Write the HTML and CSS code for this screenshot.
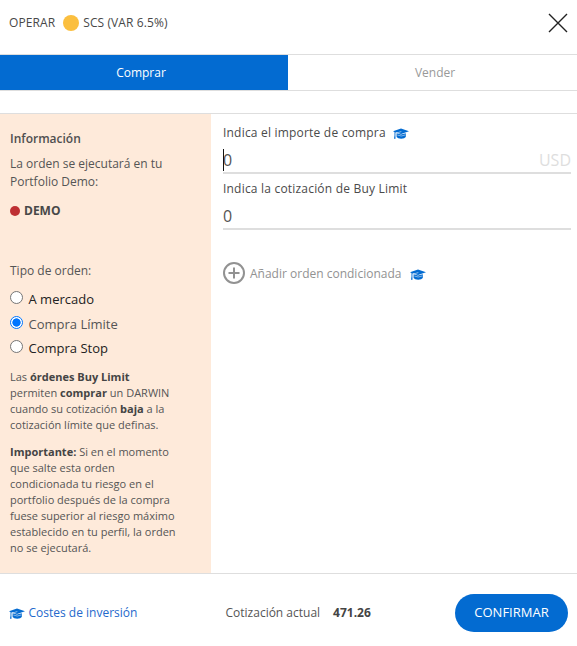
FILE: index.html
```html
<!DOCTYPE html>
<html lang="es">
<head>
<meta charset="utf-8">
<title>Operar</title>
<link rel="stylesheet" href="styles.css">
</head>
<body>
<svg width="0" height="0" class="defs">
  <symbol id="cap" viewBox="0 0 16 12">
    <path d="M8 .6 16 3.300 8 6.100 4 4.800 8.500 4 8.200 3.400 2.400 4.500V7.500L2.500 10.800H1L1.500 7.500V4L0 3.300z"/>
    <path d="M3.600 5.200 8 6.600 12.800 5.200V9Q11.700 10.700 8.200 10.700T3.600 9z"/>
    <path class="shade" d="M4.300 7Q8.200 9 12.200 7"/>
  </symbol>
</svg>
<div class="dialog">
  <header class="header">
    <span class="title">OPERAR</span>
    <span class="asset-dot"></span>
    <span class="title">SCS (VAR 6.5%)</span>
    <svg class="close" viewBox="0 0 20 20"><path d="M1 1 19 19M19 1 1 19"/></svg>
  </header>
  <nav class="tabs">
    <div class="tab active">Comprar</div>
    <div class="tab">Vender</div>
  </nav>
  <main class="body">
    <aside class="info">
      <h2>Información</h2>
      <p class="lead">La orden se ejecutará en tu<br>Portfolio Demo:</p>
      <div class="demo"><i></i>DEMO</div>
      <p class="type-label">Tipo de orden:</p>
      <div class="options">
        <label><span class="radio"></span>A mercado</label>
        <label class="selected"><span class="radio"></span>Compra Límite</label>
        <label><span class="radio"></span>Compra Stop</label>
      </div>
      <p class="note">Las <b>órdenes Buy Limit</b><br>permiten <b>comprar</b> un DARWIN<br>cuando su cotización <b>baja</b> a la<br>cotización límite que definas.</p>
      <p class="note"><b>Importante:</b> Si en el momento<br>que salte esta orden<br>condicionada tu riesgo en el<br>portfolio después de la compra<br>fuese superior al riesgo máximo<br>establecido en tu perfil, la orden<br>no se ejecutará.</p>
    </aside>
    <section class="form">
      <div class="field-label"><span>Indica el importe de compra</span><svg class="cap"><use href="#cap"/></svg></div>
      <div class="field focused"><span class="value">0</span><span class="unit">USD</span></div>
      <div class="field-label second"><span>Indica la cotización de Buy Limit</span></div>
      <div class="field"><span class="value">0</span></div>
      <div class="add">
        <svg class="plus" viewBox="0 0 22 22"><circle cx="11" cy="11" r="10"/><path d="M11 5.500V16.500M5.500 11H16.500"/></svg>
        <span>Añadir orden condicionada</span>
        <svg class="cap"><use href="#cap"/></svg>
      </div>
    </section>
  </main>
  <footer class="footer">
    <a class="costs"><svg class="cap"><use href="#cap"/></svg><span>Costes de inversión</span></a>
    <div class="quote"><span>Cotización actual</span><b>471.26</b></div>
    <div class="confirm">CONFIRMAR</div>
  </footer>
</div>
</body>
</html>
```
FILE: styles.css
```css
* { box-sizing: border-box; }
body { margin: 0; background: #fff; color: #555; font: 12px/18px "Open Sans", sans-serif; white-space: nowrap; }
h2, p { margin: 0; }
.defs { display: block; height: 0; }
.dialog { width: 577px; height: 646px; display: flex; flex-direction: column; overflow: hidden; }
.header { height: 55px; border-bottom: 1px solid #dedede; display: flex; align-items: center; padding: 0 9px 9px 9px; color: #484848; font-weight: 500; letter-spacing: .1px; }
.asset-dot { width: 16px; height: 16px; border-radius: 50%; background: #fbbf3f; margin: 0 4px 0 8px; }
.close { width: 20px; height: 20px; margin-left: auto; fill: none; stroke: #222; stroke-width: 1.4; }
.tabs { height: 36px; display: flex; border-bottom: 1px solid #dedede; }
.tab { width: 294px; flex: none; text-align: center; line-height: 35px; color: #999; }
.tab.active { width: 288px; padding-right: 6px; background: #036bd1; color: #fff; font-weight: 500; }
.body { margin-top: 22px; height: 461px; border-top: 1px solid #dedede; border-bottom: 1px solid #dedede; display: flex; }
.info { width: 211px; flex: none; background: #feeada; padding: 16px 0 0 10px; }
.info h2 { font-size: 12px; font-weight: 600; color: #4f4f4f; }
.lead { margin-top: 7px; }
.demo { display: flex; align-items: center; gap: 4px; margin-top: 11px; font-weight: 700; color: #484848; }
.demo i { width: 10px; height: 10px; border-radius: 50%; background: #be3033; }
.type-label { margin-top: 42px; }
.options { margin-top: 7px; height: 74px; }
.options label { display: flex; align-items: center; gap: 5.500px; height: 24.600px; font-size: 13px; color: #222; }
.options .selected { color: #555; }
.radio { width: 13px; height: 13px; border: 1px solid #767676; border-radius: 50%; background: #fff; margin-bottom: 3px; }
.selected .radio { border-color: #0075ff; background: radial-gradient(circle, #0075ff 3.800px, #fff 4.500px); }
.note { margin-top: 8px; font-size: 11px; line-height: 16px; }
.note + .note { margin-top: 11px; }
.note b { color: #444; }
.form { flex: 1; padding: 9px 6px 0 12px; }
.field-label { height: 20px; line-height: 20px; display: flex; align-items: center; gap: 7.500px; color: #4a4a4a; font-weight: 500; letter-spacing: .2px; }
.field-label.second { margin-top: 5px; }
.cap { width: 16px; height: 12px; flex: none; fill: #036bd1; margin-top: 2px; }
.shade { fill: none; stroke: #fff; stroke-width: .5; }
.field { position: relative; height: 31px; border-bottom: 2px solid #dedede; display: flex; justify-content: space-between; align-items: center; font-size: 16px; line-height: 24px; padding-top: 5px; }
.field.focused::before { content: ""; position: absolute; left: 0; top: 6px; width: 1px; height: 22px; background: #111; }
.unit { color: #dedede; }
.add { display: flex; align-items: center; margin-top: 32px; color: #929292; }
.add span { margin-top: 1px; }
.plus { width: 22px; height: 22px; margin-right: 5px; fill: none; stroke: #929292; stroke-width: 2; }
.add .cap { margin: 3px 0 0 8.500px; }
.footer { height: 72px; display: flex; align-items: center; padding: 6px 9px 0 9px; }
.costs { width: 216.500px; display: flex; align-items: center; gap: 4px; color: #2469cc; }
.costs .cap { margin-left: -.5px; }
.quote { display: flex; gap: 13px; color: #555; }
.quote b { color: #444; }
.confirm { margin-left: auto; width: 113px; height: 38px; border-radius: 19px; background: #036bd1; color: #fff; text-align: center; font-size: 13px; line-height: 37px; }
```
